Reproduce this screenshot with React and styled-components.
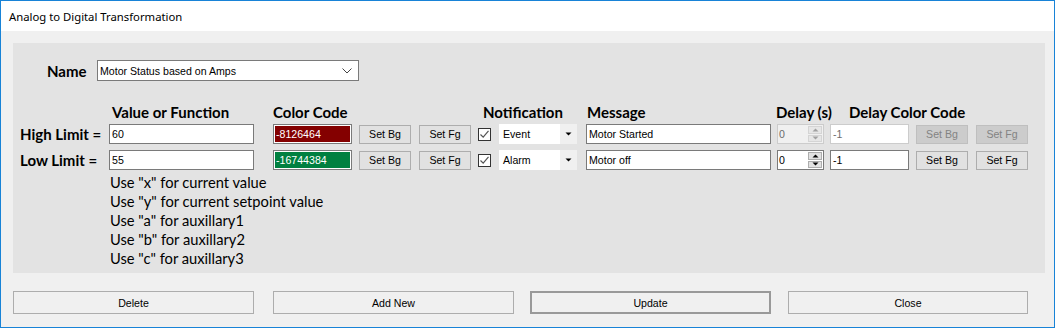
import React from "react";
import styled, { createGlobalStyle } from "styled-components";

const GlobalStyle = createGlobalStyle`
  html, body {
    margin: 0;
    padding: 0;
    background: #f0f0f0;
  }
  body {
    font-family: "Liberation Sans", Arial, sans-serif;
  }
`;

const Window = styled.div`
  width: 1055px;
  height: 328px;
  box-sizing: border-box;
  border: 1px solid #1883d7;
  background: #f0f0f0;
  display: flex;
  flex-direction: column;
`;

const TitleBar = styled.div`
  height: 30px;
  flex: none;
  background: #fff;
  display: flex;
  align-items: center;
  padding-left: 8px;
  font-family: "Segoe UI", "Noto Sans", sans-serif;
  font-size: 11.3px;
  color: #000;
`;

const Body = styled.div`
  flex: 1;
  padding: 12px 9px 0 12px;
  display: flex;
  flex-direction: column;
`;

const Panel = styled.div`
  height: 230px;
  background: #e3e3e3;
  box-sizing: border-box;
  display: flex;
  flex-direction: column;
`;

const NameRow = styled.div`
  display: flex;
  align-items: center;
  margin-top: 17px;
  padding-left: 34px;
`;

const Bold = styled.span`
  font-family: Lato, "Open Sans", sans-serif;
  font-weight: 700;
  font-size: 15px;
  color: #000;
  white-space: nowrap;
`;

const NameLabel = styled(Bold)`
  width: 50px;
`;

const Combo = styled.div`
  width: 262px;
  height: 21px;
  box-sizing: border-box;
  background: #fff;
  border: 1px solid #7a7a7a;
  display: flex;
  align-items: center;
  justify-content: space-between;
  padding: 0 6px 0 2px;
  font-size: 10.6px;
`;

const Limits = styled.div`
  padding-left: 7px;
  display: flex;
  flex-direction: column;
`;

const HeadRow = styled.div`
  display: flex;
  align-items: center;
  height: 18px;
  margin-top: 22px;
  margin-bottom: 3px;
`;

const Head = styled(Bold)`
  width: ${(p) => p.$w}px;
  margin-left: ${(p) => p.$ml || 0}px;
`;

const Row = styled.div`
  display: flex;
  align-items: center;
  height: 20px;
  margin-bottom: 6px;
`;

const RowLabel = styled(Bold)`
  width: 89px;
`;

const TextBox = styled.div`
  width: ${(p) => p.$w}px;
  margin-left: ${(p) => p.$ml || 0}px;
  height: 20px;
  box-sizing: border-box;
  border: 1px solid ${(p) => (p.$disabled ? "#cccccc" : "#7a7a7a")};
  background: #fff;
  color: ${(p) => (p.$disabled ? "#6d6d6d" : "#000")};
  font-size: 10.6px;
  display: flex;
  align-items: center;
  padding-left: 2px;
`;

const ColorBox = styled.div`
  width: 79px;
  margin-left: 19px;
  height: 20px;
  box-sizing: border-box;
  border: 1px solid #7a7a7a;
  box-shadow: inset 0 0 0 1px #fff;
  background: ${(p) => p.$bg};
  color: #fff;
  font-size: 10.6px;
  display: flex;
  align-items: center;
  padding-left: 2px;
`;

const SmallButton = styled.div`
  width: 52px;
  height: 19px;
  margin-left: ${(p) => p.$ml}px;
  box-sizing: border-box;
  border: 1px solid ${(p) => (p.$disabled ? "#bfbfbf" : "#adadad")};
  background: ${(p) => (p.$disabled ? "#cccccc" : "#e1e1e1")};
  color: ${(p) => (p.$disabled ? "#838383" : "#000")};
  font-size: 10.6px;
  display: flex;
  align-items: center;
  justify-content: center;
`;

const CheckBox = styled.div`
  width: 13px;
  height: 13px;
  margin-left: 7px;
  box-sizing: border-box;
  border: 1px solid #333;
  background: #fff;
  display: flex;
  align-items: center;
  justify-content: center;
`;

const DropList = styled.div`
  width: 78px;
  height: 20px;
  margin-left: 8px;
  background: #fff;
  display: flex;
  font-size: 10.6px;
`;

const DropText = styled.div`
  flex: 1;
  display: flex;
  align-items: center;
  padding-left: 4px;
`;

const DropArrow = styled.div`
  width: 17px;
  background: #f0f0f0;
  display: flex;
  align-items: center;
  justify-content: center;
`;

const Spinner = styled.div`
  width: 47px;
  height: 20px;
  margin-left: 6px;
  box-sizing: border-box;
  border: 1px solid ${(p) => (p.$disabled ? "#cccccc" : "#7a7a7a")};
  background: ${(p) => (p.$disabled ? "#f0f0f0" : "#fff")};
  color: ${(p) => (p.$disabled ? "#6d6d6d" : "#000")};
  font-size: 10.6px;
  display: flex;
`;

const SpinValue = styled.div`
  flex: 1;
  display: flex;
  align-items: center;
  padding-left: 1px;
`;

const SpinButtons = styled.div`
  width: 15px;
  display: flex;
  flex-direction: column;
  gap: 1px;
  padding: 1px 1px 1px 0;
  box-sizing: border-box;
`;

const SpinButton = styled.div`
  flex: 1;
  background: ${(p) => (p.$disabled ? "#e6e6e6" : "#e1e1e1")};
  border: 1px solid ${(p) => (p.$disabled ? "#d4d4d4" : "#adadad")};
  display: flex;
  align-items: center;
  justify-content: center;
`;

const Help = styled.div`
  padding-left: 97px;
  margin-top: -3px;
  font-family: Lato, "Open Sans", sans-serif;
  font-size: 14.7px;
  line-height: 19px;
  color: #000;
`;

const ButtonBar = styled.div`
  margin-top: 18px;
  display: flex;
`;

const DialogButton = styled.div`
  width: ${(p) => p.$w || 241}px;
  margin-left: ${(p) => p.$ml || 0}px;
  height: 23px;
  box-sizing: border-box;
  border: ${(p) => (p.$default ? "2px solid #999" : "1px solid #adadad")};
  background: #f0f0f0;
  font-size: 10.6px;
  color: #000;
  display: flex;
  align-items: center;
  justify-content: center;
`;

const Tick = () => (
  <svg width="11" height="11" viewBox="0 0 11 11">
    <path d="M1.5 5.5 L4.2 8.2 L9.5 1.8" fill="none" stroke="#555" strokeWidth="1.2" />
  </svg>
);

const Tri = ({ up, color = "#000" }) => (
  <svg width="7" height="4" viewBox="0 0 7 4">
    <path d={up ? "M0.5 3.5 L3.5 0.5 L6.5 3.5 Z" : "M0.5 0.5 L6.5 0.5 L3.5 3.5 Z"} fill={color} />
  </svg>
);

const Chevron = () => (
  <svg width="10" height="6" viewBox="0 0 10 6">
    <path d="M0.5 0.5 L5 5 L9.5 0.5" fill="none" stroke="#444" strokeWidth="1" />
  </svg>
);

const limits = [
  {
    label: "High Limit =",
    value: "60",
    code: "-8126464",
    color: "#840000",
    kind: "Event",
    message: "Motor Started",
    delay: "0",
    delayCode: "-1",
    delayOff: true,
  },
  {
    label: "Low Limit =",
    value: "55",
    code: "-16744384",
    color: "#008040",
    kind: "Alarm",
    message: "Motor off",
    delay: "0",
    delayCode: "-1",
    delayOff: false,
  },
];

const helpLines = [
  'Use "x" for current value',
  'Use "y" for current setpoint value',
  'Use "a" for auxillary1',
  'Use "b" for auxillary2',
  'Use "c" for auxillary3',
];

export default function App() {
  return (
    <>
      <GlobalStyle />
      <Window>
        <TitleBar>Analog to Digital Transformation</TitleBar>
        <Body>
          <Panel>
            <NameRow>
              <NameLabel>Name</NameLabel>
              <Combo>
                <span>Motor Status based on Amps</span>
                <Chevron />
              </Combo>
            </NameRow>
            <Limits>
              <HeadRow>
                <Head $ml={92} $w={161}>Value or Function</Head>
                <Head $w={210}>Color Code</Head>
                <Head $w={104}>Notification</Head>
                <Head $w={189}>Message</Head>
                <Head $w={73}>Delay (s)</Head>
                <Head $w={140}>Delay Color Code</Head>
              </HeadRow>
              {limits.map((l) => (
                <Row key={l.label}>
                  <RowLabel>{l.label}</RowLabel>
                  <TextBox $w={145}>{l.value}</TextBox>
                  <ColorBox $bg={l.color}>{l.code}</ColorBox>
                  <SmallButton $ml={7}>Set Bg</SmallButton>
                  <SmallButton $ml={8}>Set Fg</SmallButton>
                  <CheckBox>
                    <Tick />
                  </CheckBox>
                  <DropList>
                    <DropText>{l.kind}</DropText>
                    <DropArrow>
                      <Tri />
                    </DropArrow>
                  </DropList>
                  <TextBox $w={185} $ml={9}>{l.message}</TextBox>
                  <Spinner $disabled={l.delayOff}>
                    <SpinValue>{l.delay}</SpinValue>
                    <SpinButtons>
                      <SpinButton $disabled={l.delayOff}>
                        <Tri up color={l.delayOff ? "#a0a0a0" : "#000"} />
                      </SpinButton>
                      <SpinButton $disabled={l.delayOff}>
                        <Tri color={l.delayOff ? "#a0a0a0" : "#000"} />
                      </SpinButton>
                    </SpinButtons>
                  </Spinner>
                  <TextBox $w={79} $ml={6} $disabled={l.delayOff}>{l.delayCode}</TextBox>
                  <SmallButton $ml={7} $disabled={l.delayOff}>Set Bg</SmallButton>
                  <SmallButton $ml={8} $disabled={l.delayOff}>Set Fg</SmallButton>
                </Row>
              ))}
            </Limits>
            <Help>
              {helpLines.map((t) => (
                <div key={t}>{t}</div>
              ))}
            </Help>
          </Panel>
          <ButtonBar>
            <DialogButton>Delete</DialogButton>
            <DialogButton $ml={19}>Add New</DialogButton>
            <DialogButton $ml={16} $default>Update</DialogButton>
            <DialogButton $ml={17} $w={240}>Close</DialogButton>
          </ButtonBar>
        </Body>
      </Window>
    </>
  );
}
